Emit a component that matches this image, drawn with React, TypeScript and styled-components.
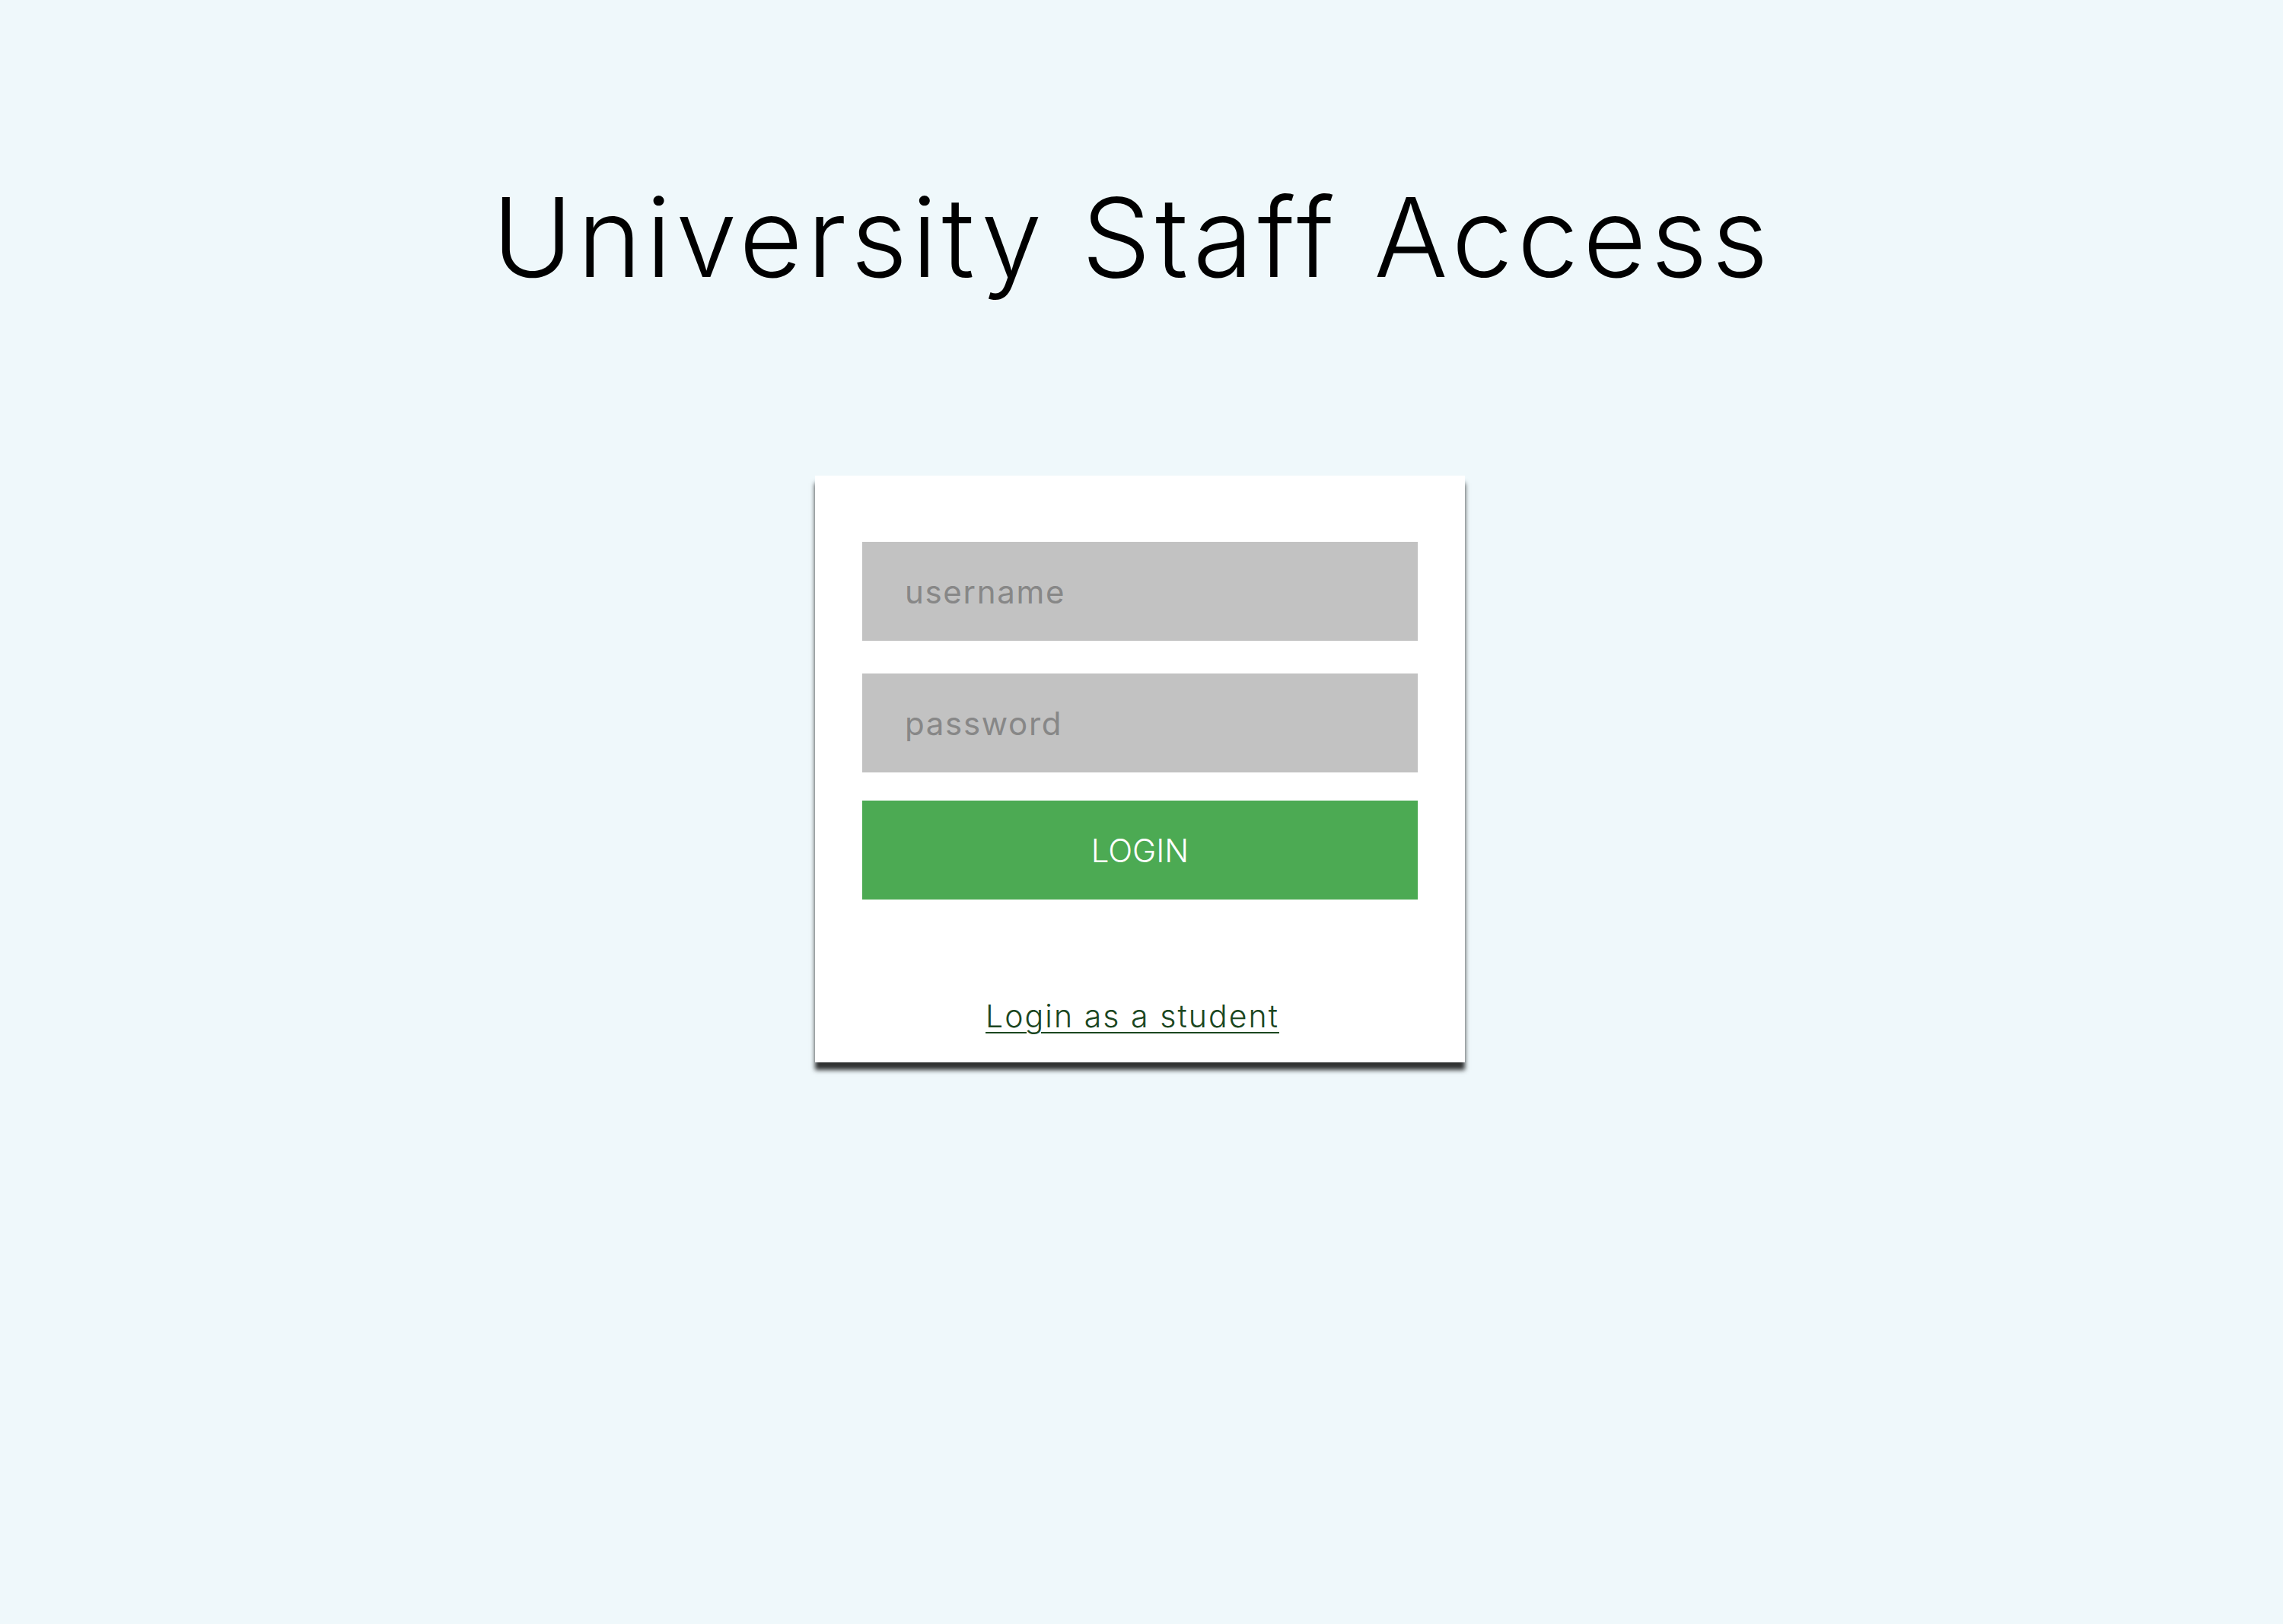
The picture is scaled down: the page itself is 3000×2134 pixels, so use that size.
import styled, { createGlobalStyle } from "styled-components";

const GlobalStyle = createGlobalStyle`
    html, body {
        margin: 0;
        padding: 0;
        background: #eff8fb;
    }
    body {
        font-family: "Inter", "Open Sans", sans-serif;
        min-height: 2134px;
    }
`

export default function App() {
    return (
        <>
            <GlobalStyle/>
            <Page>
                <Title>University Staff Access</Title>
                <Card>
                    <Input type={"text"} placeholder={"username"}/>
                    <Input type={"password"} placeholder={"password"} $gap={43}/>
                    <LoginButton type={"submit"}>LOGIN</LoginButton>
                    <StudentLink href={"#"}>Login as a student</StudentLink>
                </Card>
            </Page>
        </>
    );
}

const Page = styled.main`
    display: flex;
    flex-direction: column;
    align-items: center;
    padding-top: 222px;
`
const Title = styled.h1`
    margin: 0 24px 0 0;
    font-family: "Inter", sans-serif;
    font-weight: 300;
    font-size: 144px;
    line-height: 180px;
    letter-spacing: 0.04em;
    color: #000;
    text-align: center;
`
const Card = styled.form`
    margin: 223px 4px 0 0;
    width: 854px;
    height: 771px;
    box-sizing: border-box;
    padding: 87px 62px 0;
    background: #fff;
    box-shadow: 0 10px 6px rgba(0, 0, 0, 0.8);
    display: flex;
    flex-direction: column;
`
const Input = styled.input<{ $gap?: number }>`
    margin-top: ${p => p.$gap ?? 0}px;
    height: 130px;
    box-sizing: border-box;
    border: none;
    outline: none;
    background: #c2c2c2;
    padding: 0 56px;
    font-family: "Inter", sans-serif;
    font-size: 42px;
    letter-spacing: 0.04em;
    color: #333;

    &::placeholder {
        color: #878787;
    }
`
const LoginButton = styled.button`
    margin-top: 37px;
    height: 130px;
    border: none;
    background: #4caa53;
    color: #fff;
    font-family: "Inter", sans-serif;
    font-weight: 300;
    font-size: 42px;
    cursor: pointer;
`
const StudentLink = styled.a`
    margin: 128px 20px 0 0;
    align-self: center;
    font-family: "Inter", sans-serif;
    font-weight: 300;
    font-size: 41px;
    letter-spacing: 0.05em;
    color: #1b471f;
    text-decoration: underline;
    text-decoration-thickness: 2px;
    text-underline-offset: 6px;
`
